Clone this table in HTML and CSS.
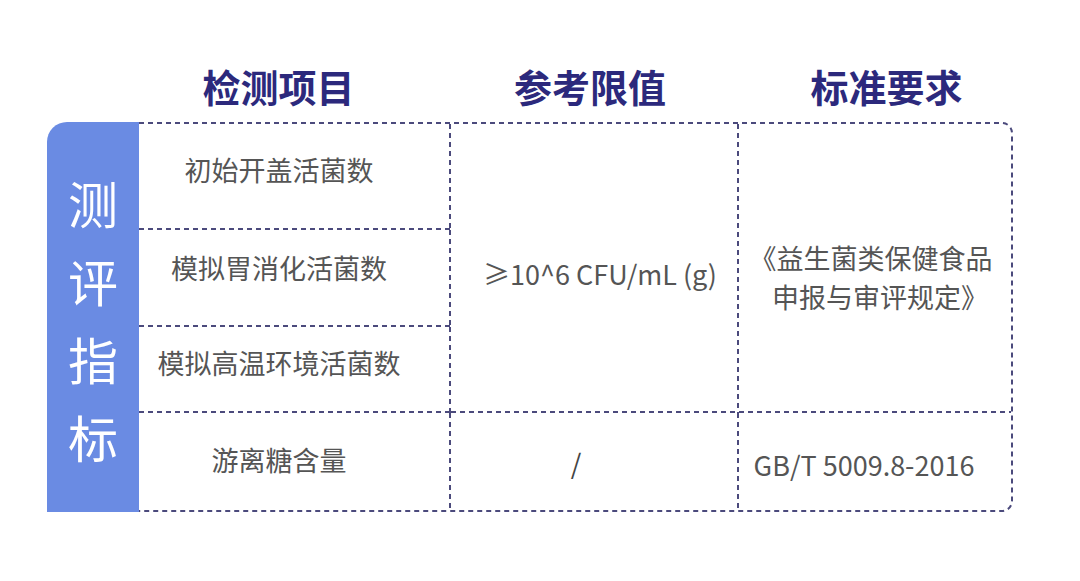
FILE: index.html
```html
<!DOCTYPE html>
<html lang="zh-CN">
<head>
<meta charset="utf-8">
<title>测评指标</title>
<link rel="stylesheet" href="styles.css">
</head>
<body>
<div class="page">
  <div class="head">
    <div class="h h1">检测项目</div>
    <div class="h h2">参考限值</div>
    <div class="h h3">标准要求</div>
  </div>
  <div class="body">
    <div class="label">
      <span>测</span><span>评</span><span>指</span><span>标</span>
    </div>
    <div class="table">
      <div class="cell c1 r1 lr lb">初始开盖活菌数</div>
      <div class="cell c2 span lr lb">≥10^6 CFU/mL (g)</div>
      <div class="cell c3 span lb"><span class="l1">《益生菌类保健食品</span><span class="l2">申报与审评规定》</span></div>
      <div class="cell c1 r2 lr lb">模拟胃消化活菌数</div>
      <div class="cell c1 r3 lr lb">模拟高温环境活菌数</div>
      <div class="cell c1 r4 lr">游离糖含量</div>
      <div class="cell c2 r4 lr slash">/</div>
      <div class="cell c3 r4 std">GB/T 5009.8-2016</div>
    </div>
  </div>
</div>
</body>
</html>
```

FILE: styles.css
```css
* { box-sizing: border-box; }
html, body {
  margin: 0;
  padding: 0;
  background: #ffffff;
}
body {
  width: 1080px;
  height: 581px;
  overflow: hidden;
  font-family: "Noto Sans CJK SC", "Noto Sans", sans-serif;
}
.page {
  width: 1080px;
  height: 581px;
}
.head {
  display: grid;
  grid-template-columns: 312px 288px 274px;
  padding-left: 139px;
  padding-top: 67px;
  margin-bottom: 17px;
}
.h {
  font-size: 38px;
  line-height: 38px;
  height: 38px;
  font-weight: 700;
  color: #2c297c;
  text-align: center;
  white-space: nowrap;
}
.h1 { padding-right: 33px; }
.h2 { padding-right: 10px; }
.h3 { padding-left: 21px; }

.body {
  display: flex;
  padding-left: 47px;
}
.label {
  width: 92px;
  height: 390px;
  background: #6a8be3;
  border-top-left-radius: 20px;
  display: flex;
  flex-direction: column;
  align-items: center;
  justify-content: center;
  padding-top: 4px;
  color: #ffffff;
  font-size: 50px;
  line-height: 78px;
  font-weight: 400;
}
.table {
  width: 874px;
  height: 390px;
  padding: 2px 2px 2px 0;
  display: grid;
  grid-template-columns: 312px 288px 272px;
  grid-template-rows: 106px 97px 86px 97px;
  background-image: url("data:image/svg+xml,%3Csvg xmlns='http://www.w3.org/2000/svg' width='874' height='390'%3E%3Cpath d='M0 1 H863 A10 10 0 0 1 873 11 V379 A10 10 0 0 1 863 389 H0' fill='none' stroke='%234b4a7c' stroke-width='2' stroke-dasharray='5 4'/%3E%3C/svg%3E");
  background-repeat: no-repeat;
}
.cell {
  display: flex;
  align-items: center;
  justify-content: center;
  font-size: 27px;
  color: #555555;
  white-space: nowrap;
  background-repeat: no-repeat;
}
/* dashed separators: bottom line, right line, or both */
.lb {
  background-image: repeating-linear-gradient(to right, #4b4a7c 0 5px, transparent 5px 9px);
  background-size: 100% 2px;
  background-position: left bottom;
}
.lr {
  background-image: repeating-linear-gradient(to bottom, #4b4a7c 0 5px, transparent 5px 9px);
  background-size: 2px 100%;
  background-position: right top;
}
.lr.lb {
  background-image:
    repeating-linear-gradient(to right, #4b4a7c 0 5px, transparent 5px 9px),
    repeating-linear-gradient(to bottom, #4b4a7c 0 5px, transparent 5px 9px);
  background-size: 100% 2px, 2px 100%;
  background-position: left bottom, right top;
}
.c1 {
  grid-column: 1;
  padding-right: 32px;
}
.c1.r1 { grid-row: 1; padding-bottom: 16px; }
.c1.r2 { grid-row: 2; padding-bottom: 23px; }
.c1.r3 { grid-row: 3; padding-bottom: 16px; }
.c1.r4 { grid-row: 4; padding-bottom: 4px; }

.c2.span {
  grid-column: 2;
  grid-row: 1 / 4;
  padding-top: 9px;
  padding-left: 10px;
}
.c3.span {
  grid-column: 3;
  grid-row: 1 / 4;
  flex-direction: column;
  line-height: 39px;
  padding-top: 16px;
  padding-right: 8px;
}
.l2 { padding-left: 18px; }
.c2.r4 {
  grid-column: 2;
  grid-row: 4;
}
.slash {
  padding-right: 38px;
  padding-top: 2px;
  color: #444444;
}
.c3.r4 {
  grid-column: 3;
  grid-row: 4;
}
.std {
  padding-right: 22px;
  padding-top: 6px;
}
```
